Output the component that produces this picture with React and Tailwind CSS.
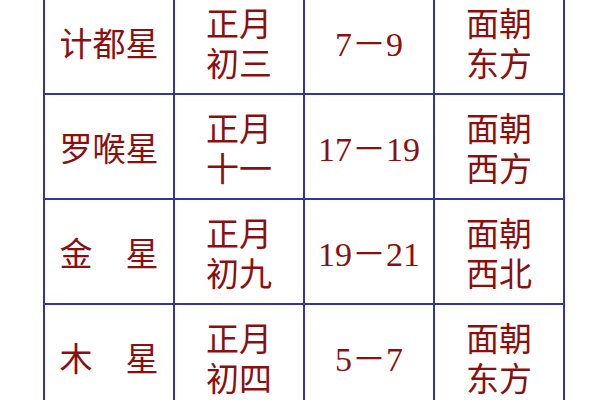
import React from 'react';

const rows = [
  { name: '计都星', date: ['正月', '初三'], time: '7－9', dir: ['面朝', '东方'] },
  { name: '罗喉星', date: ['正月', '十一'], time: '17－19', dir: ['面朝', '西方'] },
  { name: '金　星', date: ['正月', '初九'], time: '19－21', dir: ['面朝', '西北'] },
  { name: '木　星', date: ['正月', '初四'], time: '5－7', dir: ['面朝', '东方'] },
];

const Cell = ({ children, last }) => (
  <div
    className={`w-[130px] h-[105px] border-l-2 border-t-2 border-[#34349e] flex flex-col items-center justify-center pt-[7px] ${last ? 'border-r-2 w-[132px]' : ''}`}
  >
    {children}
  </div>
);

const TwoLines = ({ lines }) => (
  <div className="flex flex-col items-center leading-[40px]">
    {lines.map((l, i) => (
      <span key={i}>{l}</span>
    ))}
  </div>
);

const App = () => {
  return (
    <div
      className="w-[600px] h-[400px] bg-white overflow-hidden text-[33px] text-[#8a0f0f]"
      style={{ fontFamily: '"Liberation Serif", "Noto Sans CJK SC", serif' }}
    >
      <div className="ml-[43px] -mt-[12px] flex flex-col">
        {rows.map((r, i) => (
          <div key={i} className="flex">
            <Cell>
              <span className="leading-none">{r.name}</span>
            </Cell>
            <Cell>
              <TwoLines lines={r.date} />
            </Cell>
            <Cell>
              <span className="leading-none text-[34px]">{r.time}</span>
            </Cell>
            <Cell last>
              <TwoLines lines={r.dir} />
            </Cell>
          </div>
        ))}
      </div>
    </div>
  );
};

export default App;
